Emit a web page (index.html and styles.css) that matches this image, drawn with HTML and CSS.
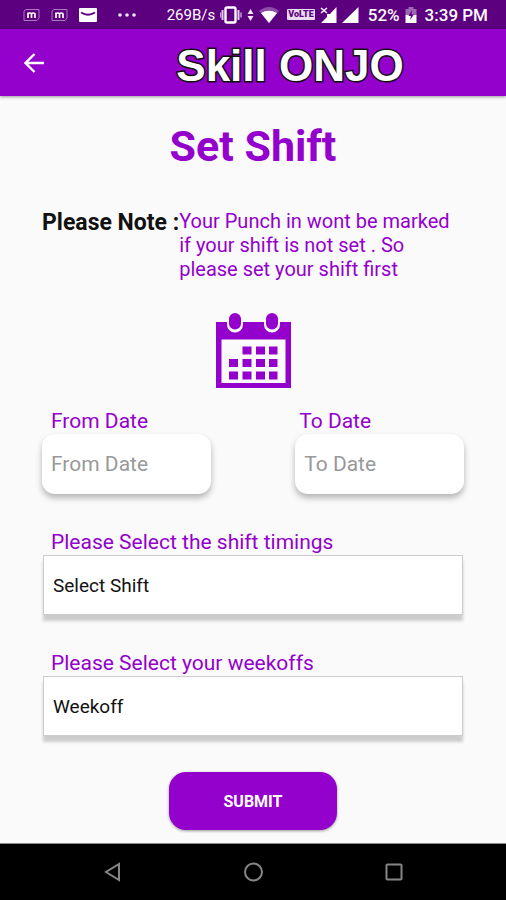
FILE: index.html
```html
<!DOCTYPE html>
<html lang="en">
<head>
<meta charset="utf-8">
<meta name="viewport" content="width=device-width, initial-scale=1">
<title>Set Shift</title>
<link rel="stylesheet" href="styles.css">
</head>
<body>
<div class="status">
  <div class="status-left">
    <svg width="17" height="16" viewBox="0 0 17 16"><path d="M3 2.500H16V11L14 13.500H1V4Z" fill="none" stroke="#a97abf"/><path d="M5 11V5.500M5 7.500Q5 6 6.800 6T8.500 7.500V11M8.500 7.500Q8.500 6 10.300 6T12 7.500V11" fill="none" stroke="#fff" stroke-width="1.700"/></svg>
    <svg width="17" height="16" viewBox="0 0 17 16"><path d="M3 2.500H16V11L14 13.500H1V4Z" fill="none" stroke="#a97abf"/><path d="M5 11V5.500M5 7.500Q5 6 6.800 6T8.500 7.500V11M8.500 7.500Q8.500 6 10.300 6T12 7.500V11" fill="none" stroke="#fff" stroke-width="1.700"/></svg>
    <svg width="18" height="16" viewBox="0 0 18 16"><rect y="1" width="18" height="14" rx="1" fill="#fff"/><path d="M2 5.500Q9 10 16 5.500" fill="none" stroke="#5c0080" stroke-width="1.800"/></svg>
    <svg class="dots" width="18" height="16" viewBox="0 0 18 16" fill="#f3e6f8"><circle cx="2" cy="8" r="1.800"/><circle cx="9" cy="8" r="1.800"/><circle cx="16" cy="8" r="1.800"/></svg>
  </div>
  <div class="status-right">
    <span class="rate">269B/s</span>
    <svg width="34" height="18" viewBox="1 0 34 18"><rect x="6.500" y="1.500" width="10" height="15" rx="1.500" fill="none" stroke="#fff" stroke-width="2.400"/><path d="M3.500 4V14M19.500 4V14" stroke="#e2c8ec" stroke-width="2"/><path d="M1.500 6.500V11.500M22 6.500V11.500" stroke="#c69bd6" stroke-width="1.500"/><path d="M28.500 8L31.500 3L34.500 8ZM28.500 10L31.500 15L34.500 10Z" fill="#f3e6f8"/></svg>
    <svg width="20" height="18" viewBox="0 0 20 18"><path d="M0 5Q10 -3 20 5L10 17Z" fill="#8f4caa"/><path d="M2 7Q10 2.500 18 7L10 17Z" fill="#fff"/></svg>
    <span class="volte">VoLTE</span>
    <svg width="17" height="18" viewBox="0 0 17 18"><path d="M16.500 1V17H1L7 11V8H10Z" fill="#fff"/><path d="M1 2L7 7M7 2L1 7" stroke="#fff" stroke-width="1.500"/></svg>
    <svg width="17" height="18" viewBox="0 0 17 18"><path d="M16.500 1V17H0Z" fill="#fff"/></svg>
    <span class="battery">52%</span>
    <svg width="12" height="18" viewBox="0 0 12 18"><path d="M3.500 1H8.500V3H11.500V9H.500V3H3.500Z" fill="#9c67b3"/><path d="M.500 9H11.500V17H.500Z" fill="#fff"/><path d="M7 4L3.500 10H6L5 14L9 8.500H6.500Z" fill="#5c0080"/></svg>
    <span class="clock">3:39 PM</span>
  </div>
</div>
<header class="appbar">
  <button class="back" type="button" aria-label="Back"><svg width="20" height="20" viewBox="0 0 20 20" fill="none" stroke="#fff" stroke-width="2.300"><path d="M20 10H2M10.500 1L1.500 10L10.500 19"/></svg></button>
  <div class="brand">Skill ONJO</div>
</header>
<main>
  <h1>Set Shift</h1>
  <div class="note"><strong>Please Note :</strong><p>Your Punch in wont be marked if your shift is not set . So please set your shift first</p></div>
  <svg class="calendar" width="75" height="76" viewBox="0 0 75 76"><path d="M0 9H75V75H0Z" fill="#9400cc"/><path d="M5.500 26.500H69.500V70H5.500Z" fill="#fafafa"/><path d="M11 9V11.500a8 8 0 0 0 16 0V9ZM48 9V11.500a8 8 0 0 0 16 0V9Z" fill="#fafafa"/><rect x="13" y="0" width="12" height="16.500" rx="6" fill="#9400cc"/><rect x="50" y="0" width="12" height="16.500" rx="6" fill="#9400cc"/><path d="M26.500 33.500h9v8h-9zM40 33.500h9v8h-9zM53 33.500h8.500v8h-8.500zM13 46h9v8h-9zM26.500 46h9v8h-9zM40 46h9v8h-9zM53 46h8.500v8h-8.500zM13 58.500h9v8h-9zM26.500 58.500h9v8h-9zM40 58.500h9v8h-9zM53 58.500h8.500v8h-8.500z" fill="#9400cc"/></svg>
  <form>
    <div class="dates">
      <div class="field"><label for="from">From Date</label><input id="from" type="text" placeholder="From Date"></div>
      <div class="field field-to"><label for="to">To Date</label><input id="to" type="text" placeholder="To Date"></div>
    </div>
    <div class="field"><label for="shift">Please Select the shift timings</label><select id="shift"><option>Select Shift</option></select></div>
    <div class="field"><label for="weekoff">Please Select your weekoffs</label><select id="weekoff"><option>Weekoff</option></select></div>
    <button class="submit" type="button">SUBMIT</button>
  </form>
</main>
<nav class="navbar">
  <button type="button" aria-label="Back"><svg width="20" height="20" viewBox="0 0 20 20" fill="none" stroke="#858585" stroke-width="2"><path d="M17 2V18L4 10Z"/></svg></button>
  <button type="button" aria-label="Home"><svg width="20" height="20" viewBox="0 0 20 20" fill="none" stroke="#858585" stroke-width="2"><circle cx="10.500" cy="10" r="8.500"/></svg></button>
  <button type="button" aria-label="Recents"><svg width="20" height="20" viewBox="0 0 20 20" fill="none" stroke="#858585" stroke-width="2"><rect x="2.500" y="2.500" width="15" height="15" rx="1"/></svg></button>
</nav>
</body>
</html>
```

FILE: styles.css
```css
* { box-sizing: border-box; }
body {
  margin: 0;
  min-height: 100vh;
  display: flex;
  flex-direction: column;
  background: #fafafa;
  color: #9400cc;
  font-family: Roboto, sans-serif;
}
svg { display: block; flex: none; }
button { border: 0; padding: 0; background: none; font-family: inherit; }

.status {
  display: flex;
  justify-content: space-between;
  align-items: center;
  height: 29px;
  padding: 0 18px 0 23px;
  background: #5c0080;
  color: #fff;
}
.status-left { display: flex; align-items: center; gap: 11px; }
.dots { margin-left: 10px; }
.status-right { display: flex; align-items: center; gap: 5px; font-size: 17px; font-weight: 500; }
.rate { font-size: 15px; font-weight: 400; }
.volte {
  margin-left: 3px;
  padding: 0 1px;
  border-radius: 1px;
  background: #eadcf0;
  color: #5c0080;
  font-size: 9px;
  font-weight: 900;
  line-height: 11px;
}
.battery { margin-left: 4px; }
.clock { margin-left: 3px; }

.appbar {
  display: flex;
  align-items: center;
  height: 67px;
  padding: 0 24px;
  background: #9400cc;
  box-shadow: 0 1px 3px rgba(0, 0, 0, .4);
}
.brand {
  flex: 1;
  padding: 6px 0 0 54px;
  color: #fff;
  text-align: center;
  font: bold 44px/61px "Liberation Sans", sans-serif;
  -webkit-text-stroke: 3px #111;
  paint-order: stroke fill;
}

main { flex: 1; padding: 20px 42px 12px; }
h1 { margin: 0; font-size: 43px; line-height: 60px; font-weight: 700; text-align: center; }
.note { display: flex; align-items: flex-start; margin-top: 33px; line-height: 24px; }
.note strong { flex: none; color: #111; font-size: 23px; font-weight: 700; line-height: 28px; }
.note p { margin: 0; font-size: 20px; }
.calendar { margin: 32px auto 20px; }

.dates { display: flex; justify-content: space-between; }
.dates .field { width: 40%; }
.field { display: flex; flex-direction: column; margin-bottom: 36px; }
label { padding-left: 9px; font-size: 21px; line-height: 25px; }
.field-to label { padding-left: 4px; }
input {
  width: 100%;
  height: 60px;
  padding: 0 9px;
  border: 0;
  border-radius: 13px;
  background: #fff;
  box-shadow: 0 4px 6px rgba(0, 0, 0, .28);
  font: 21px Roboto, sans-serif;
}
input::placeholder { color: #999; }
select {
  appearance: none;
  height: 60px;
  margin: 0 1px;
  padding: 0 9px;
  border: 1px solid #ccc;
  border-radius: 0;
  background: #fff;
  box-shadow: 0 6px 3px #ccc;
  color: #111;
  font: 19px Roboto, sans-serif;
}
.submit {
  display: block;
  width: 40%;
  height: 58px;
  margin: 0 auto;
  border-radius: 17px;
  background: #9400cc;
  box-shadow: 0 1px 3px rgba(0, 0, 0, .4);
  color: #fff;
  font-size: 16px;
  font-weight: 700;
}

.navbar {
  display: flex;
  justify-content: space-between;
  align-items: center;
  height: 57px;
  padding: 0 102px;
  border-top: 1px solid #888;
  background: #000;
}
```
